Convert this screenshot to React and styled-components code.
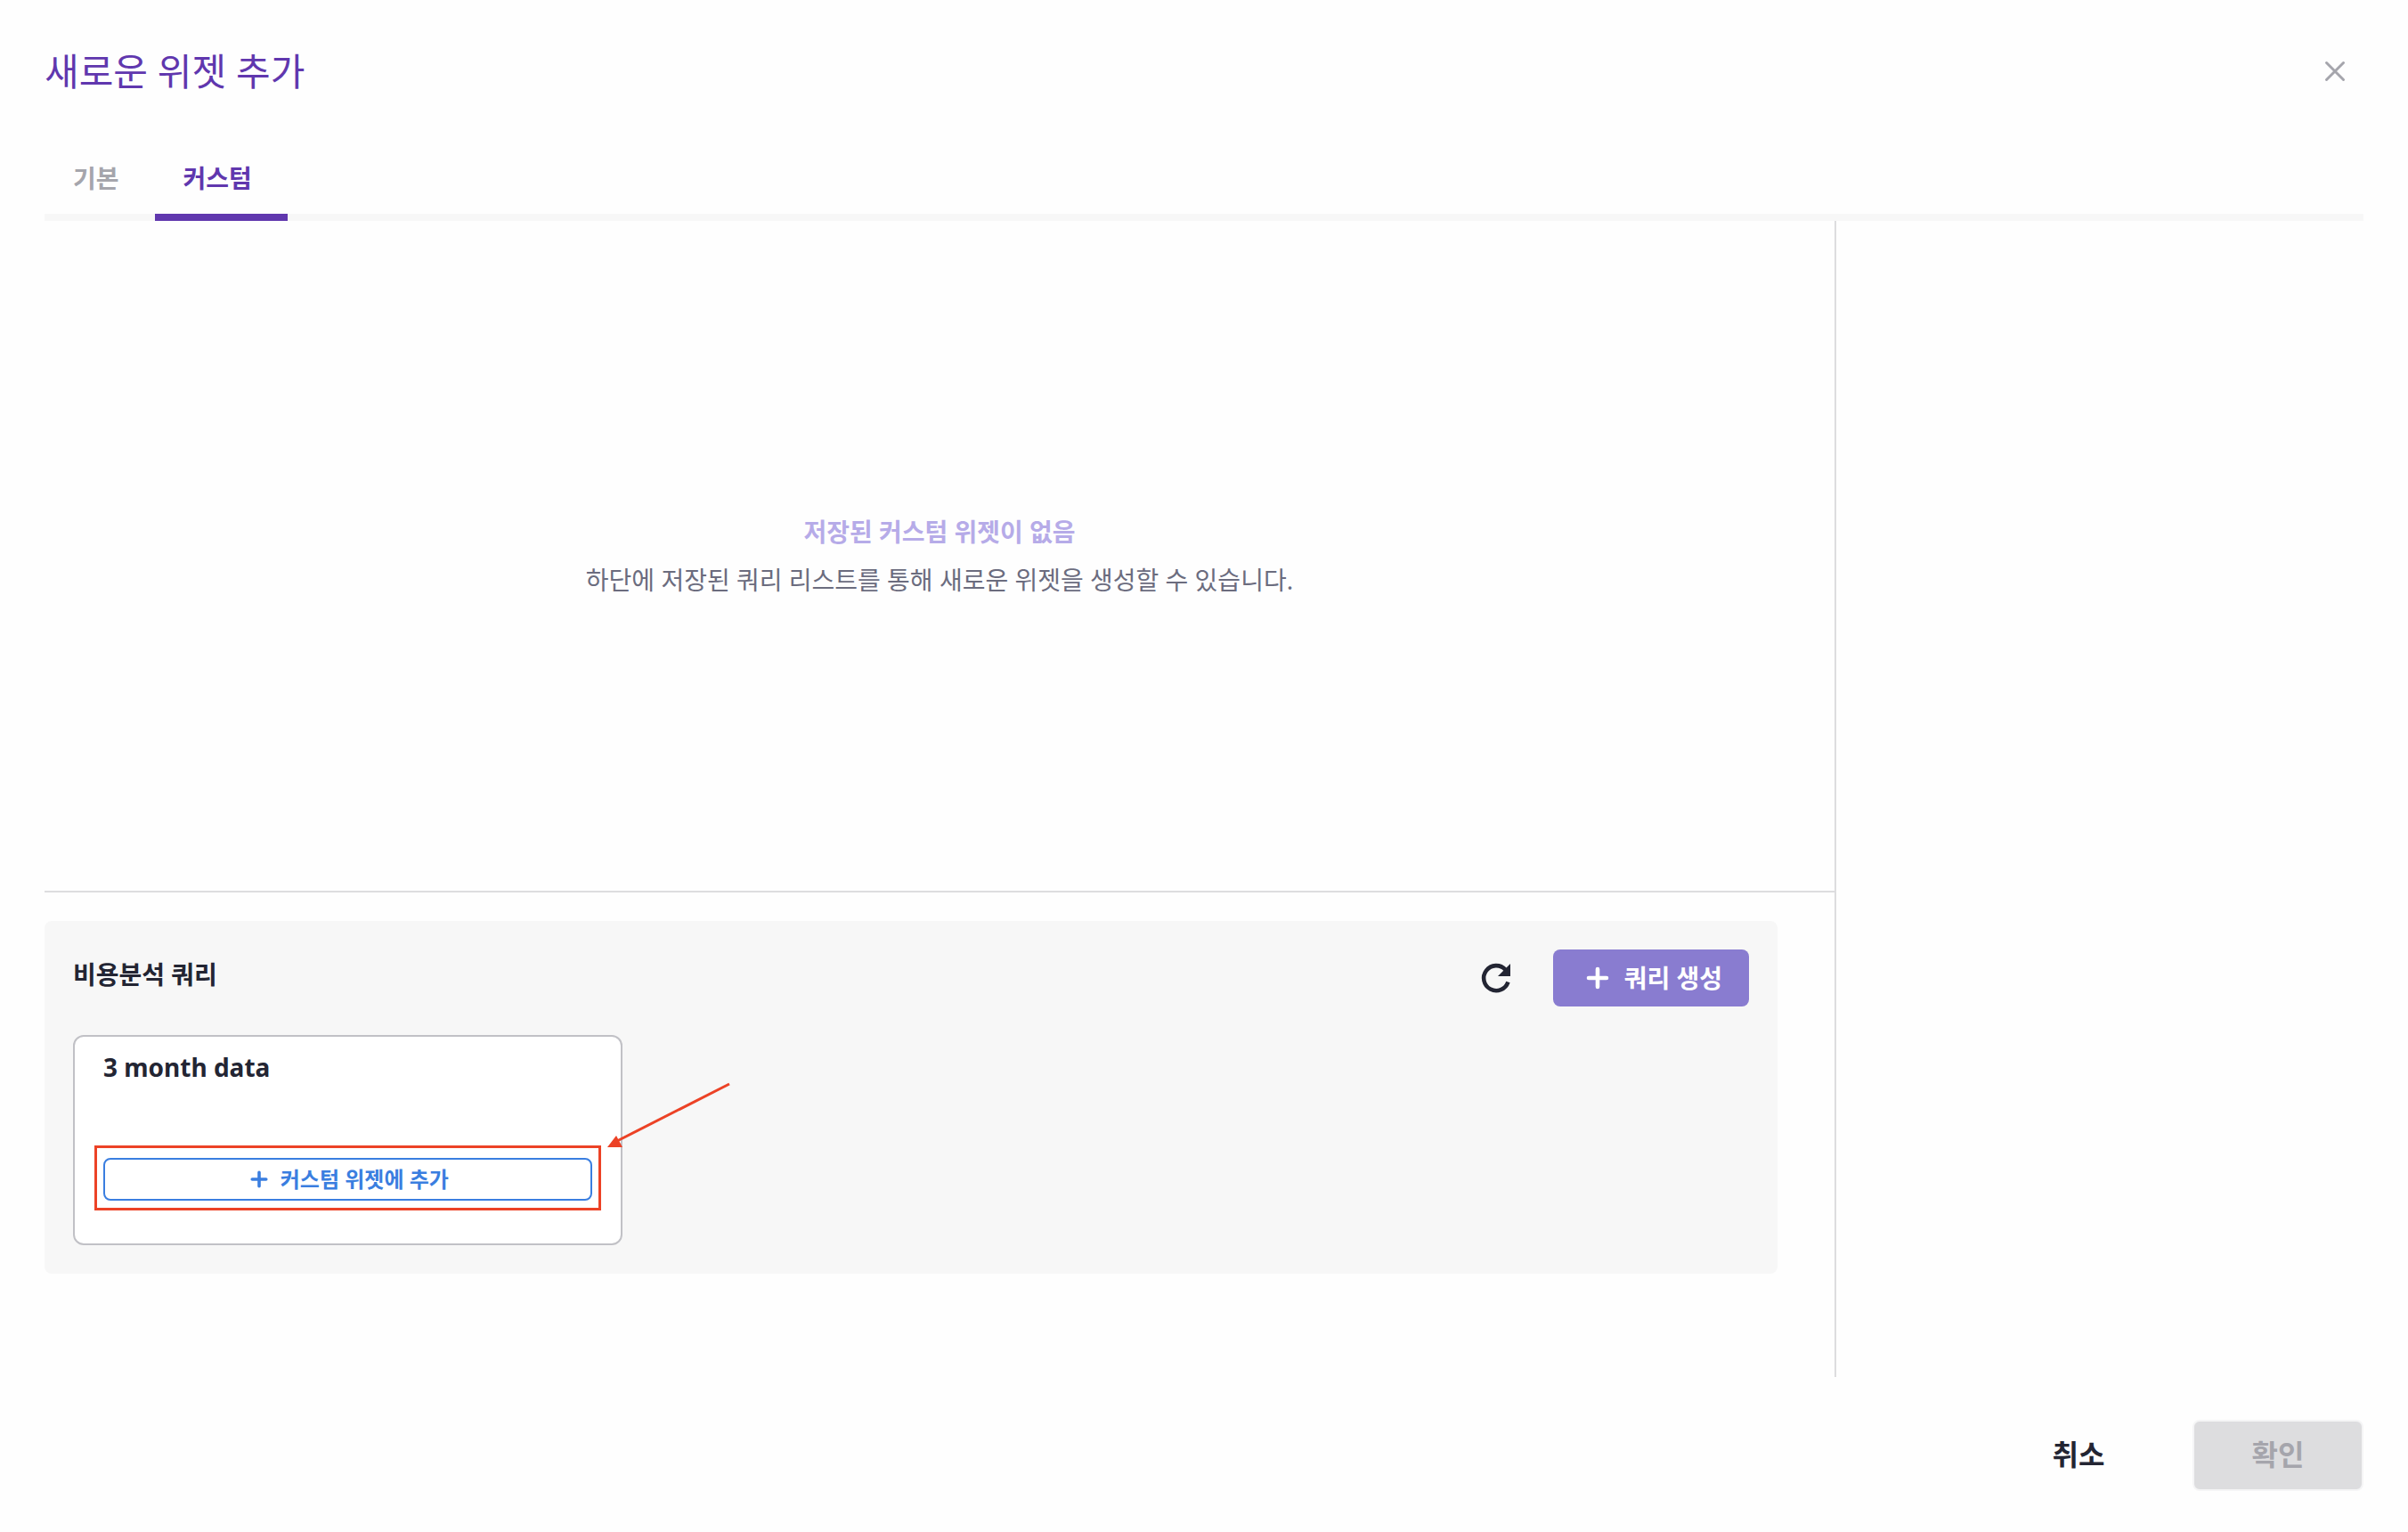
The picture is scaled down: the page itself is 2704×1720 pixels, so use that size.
import React from 'react';
import styled, { createGlobalStyle } from 'styled-components';

const color = {
  page: '#fefefe',
  panel: '#f7f7f7',
  line: '#dddddf',
  ink: '#232533',
  muted: '#a5a5ac',
  text: '#6b6c7e',
  violet: '#6037ae',
  violetSoft: '#b6abe8',
  violetButton: '#897cd0',
  blue: '#3a7ee0',
  mark: '#ec4226',
};

const GlobalStyle = createGlobalStyle`
  *, *::before, *::after { box-sizing: border-box; }
  body {
    margin: 0;
    background: ${color.page};
    color: ${color.ink};
    font-family: "Noto Sans", "Noto Sans CJK KR", sans-serif;
    font-size: 28px;
    line-height: 40px;
  }
  button {
    font: inherit;
    cursor: pointer;
  }
`;

const Modal = styled.div`
  display: flex;
  flex-direction: column;
  min-height: 100vh;
  padding: 0 50px 46px;
`;

const Header = styled.header`
  display: flex;
  align-items: center;
  justify-content: space-between;
  height: 160px;
`;

const Title = styled.h1`
  margin: 0;
  color: ${color.violet};
  font-size: 42px;
  font-weight: 400;
  line-height: 60px;
`;

const IconButton = styled.button`
  display: inline-flex;
  align-items: center;
  justify-content: center;
  width: 64px;
  height: 64px;
  padding: 0;
  border: 0;
  background: none;
  color: ${(p) => p.$color};
`;

const TabList = styled.div`
  display: flex;
  height: 88px;
  box-shadow: inset 0 -8px 0 ${color.panel};
`;

const Tab = styled.button`
  padding: 0 40px 0 32px;
  border: 0;
  border-bottom: 8px solid ${(p) => (p.$active ? color.violet : 'transparent')};
  background: none;
  color: ${(p) => (p.$active ? color.violet : color.muted)};
  font-weight: 700;
`;

const Body = styled.main`
  display: grid;
  grid-template-columns: minmax(0, 1fr) 592px;
  flex: 1;
`;

const Content = styled.div`
  display: flex;
  flex-direction: column;
  border-right: 2px solid ${color.line};
`;

const EmptyState = styled.section`
  display: flex;
  flex: 1;
  flex-direction: column;
  align-items: center;
  justify-content: center;
  gap: 14px;
  border-bottom: 2px solid ${color.line};
`;

const EmptyTitle = styled.p`
  margin: 0;
  color: ${color.violetSoft};
  font-weight: 700;
`;

const EmptyText = styled.p`
  margin: 0;
  color: ${color.text};
`;

const QueryArea = styled.section`
  padding: 32px 64px 116px 0;
`;

const QueryPanel = styled.div`
  display: flex;
  flex-direction: column;
  gap: 32px;
  padding: 32px;
  border-radius: 8px;
  background: ${color.panel};
`;

const PanelHeader = styled.div`
  display: flex;
  align-items: center;
  justify-content: space-between;
`;

const PanelTitle = styled.h2`
  margin: 0;
  padding-bottom: 8px;
  font-size: 28px;
  font-weight: 700;
`;

const Actions = styled.div`
  display: flex;
  align-items: center;
  gap: 32px;
`;

const CreateButton = styled.button`
  display: inline-flex;
  align-items: center;
  gap: 12px;
  height: 64px;
  padding: 0 30px 0 32px;
  border: 0;
  border-radius: 8px;
  background: ${color.violetButton};
  color: #ffffff;
  font-weight: 700;
`;

const CardGrid = styled.div`
  display: grid;
  grid-template-columns: repeat(3, minmax(0, 1fr));
  gap: 16px;
`;

const Card = styled.article`
  display: flex;
  flex-direction: column;
  justify-content: space-between;
  height: 236px;
  padding: 14px 32px 48px;
  border: 2px solid #c1c1c6;
  border-radius: 12px;
  background: #ffffff;
`;

const CardTitle = styled.h3`
  margin: 0;
  font-size: 28px;
  font-weight: 700;
`;

const Highlighted = styled.div`
  position: relative;
  display: flex;
`;

const HighlightFrame = styled.span`
  position: absolute;
  inset: -14px -10px -11px;
  border: 3px solid ${color.mark};
  pointer-events: none;
`;

const HighlightArrow = styled.svg`
  position: absolute;
  left: 100%;
  bottom: 100%;
  margin-left: 16px;
  margin-bottom: 12px;
  pointer-events: none;
`;

const AddButton = styled.button`
  display: flex;
  flex: 1;
  align-items: center;
  justify-content: center;
  gap: 10px;
  height: 48px;
  padding: 0;
  border: 2px solid ${color.blue};
  border-radius: 8px;
  background: #ffffff;
  color: ${color.blue};
  font-size: 24px;
  font-weight: 700;
`;

const Footer = styled.footer`
  display: flex;
  justify-content: flex-end;
  gap: 32px;
  padding-top: 48px;
`;

const FooterButton = styled.button`
  width: 192px;
  height: 80px;
  padding: 0 0 2px;
  border: 2px solid transparent;
  border-radius: 8px;
  background: none;
  color: ${color.ink};
  font-size: 32px;
  font-weight: 700;

  &:disabled {
    border-color: #f5f5f6;
    background: ${color.line};
    color: ${color.muted};
    cursor: default;
  }
`;

function PlusIcon({ size }) {
  return (
    <svg width={size} height={size} viewBox="0 0 36 36" fill="none" aria-hidden="true">
      <path d="M18 8v20M8 18h20" stroke="currentColor" strokeWidth="4.600" strokeLinecap="round" />
    </svg>
  );
}

function CloseIcon() {
  return (
    <svg width="32" height="32" viewBox="0 0 32 32" fill="none" aria-hidden="true">
      <path d="M6.500 6.500l19 19M25.500 6.500l-19 19" stroke="currentColor" strokeWidth="3" strokeLinecap="round" />
    </svg>
  );
}

function RefreshIcon() {
  return (
    <svg width="48" height="48" viewBox="0 0 24 24" fill="none" aria-hidden="true">
      <path d="M18.720 14.250A7 7 0 1 1 17.200 7.300" stroke="currentColor" strokeWidth="2.300" />
      <path d="M20 4v7h-7z" fill="currentColor" />
    </svg>
  );
}

const tabs = [
  { id: 'default', label: '기본' },
  { id: 'custom', label: '커스텀' },
];

const queries = [{ id: 'q1', name: '3 month data' }];

function QueryCard({ name }) {
  return (
    <Card>
      <CardTitle>{name}</CardTitle>
      <Highlighted>
        <AddButton type="button">
          <PlusIcon size={28} />
          커스텀 위젯에 추가
        </AddButton>
        <HighlightFrame />
        <HighlightArrow width="140" height="74" viewBox="0 0 140 74" aria-hidden="true">
          <path d="M138 3L12 67" stroke={color.mark} strokeWidth="3" />
          <path d="M1 74L11 61L18 74z" fill={color.mark} />
        </HighlightArrow>
      </Highlighted>
    </Card>
  );
}

export default function App() {
  const [active, setActive] = React.useState('custom');

  return (
    <>
      <GlobalStyle />
      <Modal role="dialog" aria-labelledby="modal-title">
        <Header>
          <Title id="modal-title">새로운 위젯 추가</Title>
          <IconButton type="button" aria-label="닫기" $color={color.muted}>
            <CloseIcon />
          </IconButton>
        </Header>
        <TabList role="tablist">
          {tabs.map((tab) => (
            <Tab
              key={tab.id}
              type="button"
              role="tab"
              aria-selected={tab.id === active}
              $active={tab.id === active}
              onClick={() => setActive(tab.id)}
            >
              {tab.label}
            </Tab>
          ))}
        </TabList>
        <Body>
          <Content>
            <EmptyState>
              <EmptyTitle>저장된 커스텀 위젯이 없음</EmptyTitle>
              <EmptyText>하단에 저장된 쿼리 리스트를 통해 새로운 위젯을 생성할 수 있습니다.</EmptyText>
            </EmptyState>
            <QueryArea>
              <QueryPanel>
                <PanelHeader>
                  <PanelTitle>비용분석 쿼리</PanelTitle>
                  <Actions>
                    <IconButton type="button" aria-label="새로고침" $color={color.ink}>
                      <RefreshIcon />
                    </IconButton>
                    <CreateButton type="button">
                      <PlusIcon size={36} />
                      쿼리 생성
                    </CreateButton>
                  </Actions>
                </PanelHeader>
                <CardGrid>
                  {queries.map((query) => (
                    <QueryCard key={query.id} name={query.name} />
                  ))}
                </CardGrid>
              </QueryPanel>
            </QueryArea>
          </Content>
        </Body>
        <Footer>
          <FooterButton type="button">취소</FooterButton>
          <FooterButton type="button" disabled>
            확인
          </FooterButton>
        </Footer>
      </Modal>
    </>
  );
}
